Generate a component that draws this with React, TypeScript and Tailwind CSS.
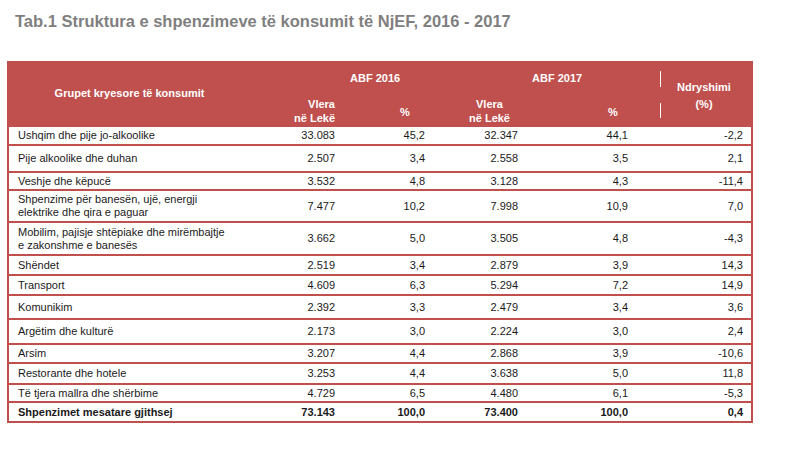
import React from "react";

type Row = {
  label: string[];
  v16: string;
  p16: string;
  v17: string;
  p17: string;
  diff: string;
  h: string;
  bold?: boolean;
};

const COLS = "grid grid-cols-[241px_90px_90px_93px_110px_118px]";

const ROWS: Row[] = [
  { label: ["Ushqim dhe pije jo-alkoolike"], v16: "33.083", p16: "45,2", v17: "32.347", p17: "44,1", diff: "-2,2", h: "h-[19px]" },
  { label: ["Pije alkoolike dhe duhan"], v16: "2.507", p16: "3,4", v17: "2.558", p17: "3,5", diff: "2,1", h: "h-[27px]" },
  { label: ["Veshje dhe këpucë"], v16: "3.532", p16: "4,8", v17: "3.128", p17: "4,3", diff: "-11,4", h: "h-[18px]" },
  {
    label: ["Shpenzime për banesën, ujë, energji", "elektrike dhe qira e paguar"],
    v16: "7.477", p16: "10,2", v17: "7.998", p17: "10,9", diff: "7,0", h: "h-[32px]",
  },
  {
    label: ["Mobilim, pajisje shtëpiake dhe mirëmbajtje", "e zakonshme e banesës"],
    v16: "3.662", p16: "5,0", v17: "3.505", p17: "4,8", diff: "-4,3", h: "h-[33px]",
  },
  { label: ["Shëndet"], v16: "2.519", p16: "3,4", v17: "2.879", p17: "3,9", diff: "14,3", h: "h-[20px]" },
  { label: ["Transport"], v16: "4.609", p16: "6,3", v17: "5.294", p17: "7,2", diff: "14,9", h: "h-[20px]" },
  { label: ["Komunikim"], v16: "2.392", p16: "3,3", v17: "2.479", p17: "3,4", diff: "3,6", h: "h-[24px]" },
  { label: ["Argëtim dhe kulturë"], v16: "2.173", p16: "3,0", v17: "2.224", p17: "3,0", diff: "2,4", h: "h-[25px]" },
  { label: ["Arsim"], v16: "3.207", p16: "4,4", v17: "2.868", p17: "3,9", diff: "-10,6", h: "h-[19px]" },
  { label: ["Restorante dhe hotele"], v16: "3.253", p16: "4,4", v17: "3.638", p17: "5,0", diff: "11,8", h: "h-[21px]" },
  { label: ["Të tjera mallra dhe shërbime"], v16: "4.729", p16: "6,5", v17: "4.480", p17: "6,1", diff: "-5,3", h: "h-[18px]" },
  {
    label: ["Shpenzimet mesatare gjithsej"],
    v16: "73.143", p16: "100,0", v17: "73.400", p17: "100,0", diff: "0,4", h: "h-[20px]", bold: true,
  },
];

export default function App() {
  return (
    <div className="w-[800px] h-[452px] bg-white overflow-hidden font-['Liberation_Sans',Arial,sans-serif]">
      <h1 className="pt-[11px] pl-[15px] text-[16.5px] leading-[20px] font-bold text-[#7f7f7f]">
        Tab.1 Struktura e shpenzimeve të konsumit të NjEF, 2016 - 2017
      </h1>

      <div className="mt-[30px] ml-[7px] w-[746px] border-x-2 border-[#c0504d] text-[11px]">
        {/* Header */}
        <div className={`${COLS} grid-rows-[33px_33px] bg-[#c0504d] text-white font-bold leading-[14px]`}>
          <div className="row-span-2 flex items-center justify-center pb-[2px]">Grupet kryesore të konsumit</div>
          <div className="col-span-2 pl-[100px] pt-[10px]">ABF 2016</div>
          <div className="col-span-2 pl-[102px] pt-[10px]">ABF 2017</div>
          <div className="row-span-2 flex">
            <div className="ml-[27px] flex flex-col gap-[16px] pt-[10px]">
              <div className="w-px h-[16px] bg-white" />
              <div className="w-px h-[15px] bg-white" />
            </div>
            <div className="flex-1 text-center pt-[18px] leading-[17px] pr-[4px]">
              Ndryshimi
              <br />
              (%)
            </div>
          </div>
          <div className="text-right pr-[5px] pt-[3px]">
            Vlera
            <br />
            në Lekë
          </div>
          <div className="pl-[60px] pt-[11px]">%</div>
          <div className="text-center pl-[26px] pt-[3px]">
            Vlera
            <br />
            në Lekë
          </div>
          <div className="pl-[85px] pt-[11px]">%</div>
        </div>

        {/* Body */}
        {ROWS.map((r) => (
          <div
            key={r.label[0]}
            className={`${COLS} ${r.h} items-center border-b-2 border-[#c0504d] leading-[13px] text-[#1a1a1a] ${r.bold ? "font-bold" : ""}`}
          >
            <div className="pl-[9px]">
              {r.label.map((l) => (
                <div key={l}>{l}</div>
              ))}
            </div>
            <div className="text-right pr-[5px]">{r.v16}</div>
            <div className="text-right pr-[5px]">{r.p16}</div>
            <div className="text-right pr-[5px]">{r.v17}</div>
            <div className="text-right pr-[5px]">{r.p17}</div>
            <div className="text-right pr-[8px]">{r.diff}</div>
          </div>
        ))}
      </div>
    </div>
  );
}
